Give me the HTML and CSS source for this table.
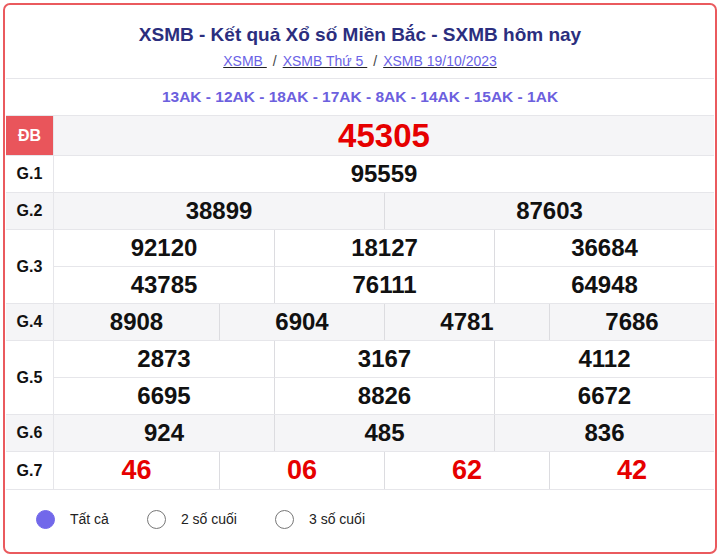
FILE: index.html
```html
<!DOCTYPE html>
<html lang="vi">
<head>
<meta charset="utf-8">
<link rel="stylesheet" href="styles.css">
</head>
<body>
<div class="card">
  <div class="head">
    <h1 class="title">XSMB - Kết quả Xổ số Miền Bắc - SXMB hôm nay</h1>
    <div class="crumbs">
      <a href="#">XSMB </a><span class="sep">/</span><a href="#">XSMB Thứ 5 </a><span class="sep">/</span><a href="#">XSMB 19/10/2023</a>
    </div>
  </div>
  <div class="codes">13AK - 12AK - 18AK - 17AK - 8AK - 14AK - 15AK - 1AK</div>
  <div class="table">
    <div class="row db">
      <div class="label">ĐB</div>
      <div class="cells c1"><div class="num red big">45305</div></div>
    </div>
    <div class="row">
      <div class="label">G.1</div>
      <div class="cells c1"><div class="num">95559</div></div>
    </div>
    <div class="row gray">
      <div class="label">G.2</div>
      <div class="cells c2"><div class="num">38899</div><div class="num">87603</div></div>
    </div>
    <div class="row">
      <div class="label">G.3</div>
      <div class="cells c3">
        <div class="num">92120</div><div class="num">18127</div><div class="num">36684</div>
        <div class="num">43785</div><div class="num">76111</div><div class="num">64948</div>
      </div>
    </div>
    <div class="row gray">
      <div class="label">G.4</div>
      <div class="cells c4"><div class="num">8908</div><div class="num">6904</div><div class="num">4781</div><div class="num">7686</div></div>
    </div>
    <div class="row">
      <div class="label">G.5</div>
      <div class="cells c3">
        <div class="num">2873</div><div class="num">3167</div><div class="num">4112</div>
        <div class="num">6695</div><div class="num">8826</div><div class="num">6672</div>
      </div>
    </div>
    <div class="row gray">
      <div class="label">G.6</div>
      <div class="cells c3"><div class="num">924</div><div class="num">485</div><div class="num">836</div></div>
    </div>
    <div class="row">
      <div class="label">G.7</div>
      <div class="cells c4"><div class="num red mid">46</div><div class="num red mid">06</div><div class="num red mid">62</div><div class="num red mid">42</div></div>
    </div>
  </div>
  <div class="options">
    <label class="opt"><span class="radio on"></span>Tất cả</label>
    <label class="opt"><span class="radio"></span>2 số cuối</label>
    <label class="opt"><span class="radio"></span>3 số cuối</label>
  </div>
</div>
</body>
</html>
```
FILE: styles.css
```css
* { box-sizing: border-box; }
html, body { margin: 0; padding: 0; background: #fff; }
body {
  font-family: "Liberation Sans", Arial, sans-serif;
  color: #111;
  padding: 3px;
}
.card {
  border: 2px solid #ea5a5e;
  border-radius: 7px;
  height: 551px;
  padding: 0 1px;
  overflow: hidden;
}
.head {
  height: 74px;
  padding-top: 20px;
  text-align: center;
  border-bottom: 1px solid #e6e6ea;
}
.title {
  margin: 0;
  font-size: 19px;
  line-height: 20px;
  font-weight: bold;
  color: #2b2e7e;
}
.crumbs {
  margin-top: 8px;
  font-size: 14px;
  line-height: 16px;
  color: #333;
}
.crumbs a { color: #6a62e6; text-decoration: underline; text-decoration-color: #222; }
.crumbs .sep { margin: 0 6px; color: #444; }
.codes {
  height: 37px;
  line-height: 36px;
  text-align: center;
  font-size: 15.5px;
  font-weight: bold;
  color: #6c60de;
  border-bottom: 1px solid #e6e6ea;
}
.table { display: flex; flex-direction: column; }
.row {
  display: flex;
  border-bottom: 1px solid #e6e6ea;
}
.row.gray { background: #f5f5f7; }
.label {
  width: 48px;
  flex: none;
  border-right: 1px solid #e6e6ea;
  display: flex;
  align-items: center;
  justify-content: center;
  font-weight: bold;
  font-size: 16px;
  color: #111;
  background: #fff;
}
.row.gray .label { background: #f5f5f7; }
.row.db .label { background: #e9555b; color: #fff; }
.row.db { background: #f5f5f7; }
.cells { flex: 1; display: grid; }
.c1 { grid-template-columns: 1fr; }
.c2 { grid-template-columns: 1fr 1fr; }
.c3 { grid-template-columns: 1fr 1fr 1fr; }
.c4 { grid-template-columns: 1fr 1fr 1fr 1fr; }
.num {
  height: 36px;
  display: flex;
  align-items: center;
  justify-content: center;
  font-size: 24px;
  font-weight: bold;
  color: #111;
  position: relative;
}
.c2 .num:not(:nth-child(2n+1)),
.c3 .num:not(:nth-child(3n+1)),
.c4 .num:not(:nth-child(4n+1)) { border-left: 1px solid #dcdce0; }
.c3 .num:nth-child(n+4) { border-top: 1px solid #e6e6ea; height: 37px; }
.num.red { color: #e60000; }
.num.big { font-size: 33px; height: 39px; }
.num.mid { font-size: 27px; height: 37px; }
.options {
  display: flex;
  align-items: center;
  height: 58px;
  padding-left: 30px;
}
.opt {
  display: flex;
  align-items: center;
  font-size: 14px;
  color: #222;
  margin-right: 38px;
}
.radio {
  width: 19px;
  height: 19px;
  border-radius: 50%;
  border: 1px solid #777;
  margin-right: 15px;
  background: #fff;
}
.radio.on { background: #7268ea; border-color: #7268ea; }
```
